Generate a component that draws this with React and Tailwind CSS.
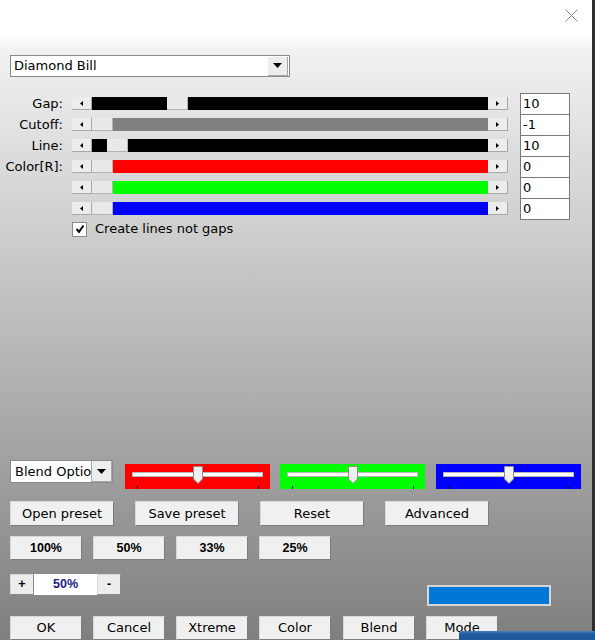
import React from "react";

function Arrow({ dir }) {
  return (
    <div className="w-[20px] h-full bg-[#ededed] border-b border-r border-[#a8a8a8] flex items-center justify-center shrink-0">
      <svg width="3" height="5" viewBox="0 0 3 5">
        <path d={dir === "l" ? "M3 0L0 2.5L3 5Z" : "M0 0L3 2.5L0 5Z"} fill="#000" />
      </svg>
    </div>
  );
}

function Slider({ offsetCls, offsetColor, trackColor }) {
  return (
    <div className="flex h-[13px] w-[436px]">
      <Arrow dir="l" />
      <div className="flex flex-1">
        {offsetCls && <div className={`${offsetCls} ${offsetColor} h-full`} />}
        <div className="w-[21px] h-full bg-[#e9e9e9] border-r border-b border-[#b4b4b4] shrink-0" />
        <div className={`flex-1 h-full ${trackColor}`} />
      </div>
      <Arrow dir="r" />
    </div>
  );
}

function Row({ label, value, slider }) {
  return (
    <div className="flex h-[21px]">
      <div className="w-[63px] text-right self-center leading-[15px]">{label}</div>
      <div className="ml-[9px] self-center">{slider}</div>
      <div className="ml-[12px] w-[50px] h-[22px] self-start border border-[#7a7a7a] bg-white pl-[2px] leading-[20px]">
        {value}
      </div>
    </div>
  );
}

function ColorPanel({ bg }) {
  return (
    <div className={`relative w-[145px] h-[25px] ${bg} shrink-0 pt-[8px] pl-[7px]`}>
      <div className="w-[131px] h-[5px] bg-white border border-[#b8b8b8]" />
      <svg className="absolute left-[68px] top-[2px]" width="10" height="18" viewBox="0 0 10 18">
        <path d="M0.5 0.5H9.5V13L5 17.5L0.5 13Z" fill="#f0f0f0" stroke="#8c8c8c" />
      </svg>
      <div className="absolute left-[12px] top-[22px] w-px h-[3px] bg-black" />
      <div className="absolute left-[133px] top-[22px] w-px h-[3px] bg-black" />
    </div>
  );
}

function Btn({ children, w = "w-[104px]", h = "h-[25px]", extra = "" }) {
  return (
    <div
      className={`${w} ${h} ${extra} shrink-0 bg-[#f0f0f0] border border-[#d8d8d8] border-b-[#7c7c7c] border-r-[#7c7c7c] flex items-center justify-center`}
    >
      {children}
    </div>
  );
}

export default function App() {
  return (
    <div
      className="relative w-[595px] h-[640px] overflow-hidden flex text-[13px] text-black"
      style={{ fontFamily: '"DejaVu Sans", Verdana, sans-serif' }}
    >
      <div className="w-[592px] h-full flex flex-col bg-[linear-gradient(to_bottom,#ffffff_0px,#ffffff_34px,#f1f1f1_50px,#7f7f7f_640px)]">
        {/* header */}
        <div className="h-[55px] flex justify-end items-start pt-[9px] pr-[14px] shrink-0">
          <svg width="13" height="13" viewBox="0 0 13 13">
            <path d="M0.5 0.5L12.5 12.5M12.5 0.5L0.5 12.5" stroke="#8a8a8a" strokeWidth="1" />
          </svg>
        </div>

        {/* preset dropdown */}
        <div className="ml-[10px] w-[280px] h-[22px] bg-white border border-[#8a8a8a] flex items-center shrink-0">
          <div className="flex-1 pl-[3px] leading-[20px]">Diamond Bill</div>
          <div className="w-[20px] h-[19px] mr-px bg-[#ededed] border-b border-r border-[#a8a8a8] flex items-center justify-center">
            <svg width="9" height="5" viewBox="0 0 9 5">
              <path d="M0 0H9L4.5 5Z" fill="#000" />
            </svg>
          </div>
        </div>

        {/* slider rows */}
        <div className="mt-[16px] flex flex-col shrink-0">
          <Row label="Gap:" value="10" slider={<Slider offsetCls="w-[75px]" offsetColor="bg-black" trackColor="bg-black" />} />
          <Row label="Cutoff:" value="-1" slider={<Slider trackColor="bg-[#808080]" />} />
          <Row label="Line:" value="10" slider={<Slider offsetCls="w-[15px]" offsetColor="bg-black" trackColor="bg-black" />} />
          <Row label="Color[R]:" value="0" slider={<Slider trackColor="bg-[#ff0000]" />} />
          <Row label="" value="0" slider={<Slider trackColor="bg-[#00ff00]" />} />
          <Row label="" value="0" slider={<Slider trackColor="bg-[#0000ff]" />} />
        </div>

        {/* checkbox */}
        <div className="mt-[2px] ml-[72px] flex items-center h-[16px] shrink-0">
          <div className="w-[15px] h-[15px] bg-white border border-[#8a8a8a] flex items-center justify-center">
            <svg width="10" height="10" viewBox="0 0 10 10">
              <path d="M1.5 5L4 7.8L8.5 1.5" stroke="#000" strokeWidth="2" fill="none" />
            </svg>
          </div>
          <div className="ml-[8px] leading-[16px]">Create lines not gaps</div>
        </div>

        {/* blend row */}
        <div className="mt-[223px] ml-[10px] flex items-start shrink-0">
          <div className="w-[103px] h-[23px] bg-white border border-[#8a8a8a] flex items-center overflow-hidden shrink-0">
            <div className="flex-1 pl-[4px] whitespace-nowrap overflow-hidden leading-[21px]">Blend Optio</div>
            <div className="w-[21px] h-[21px] bg-[#ededed] border-l border-b border-r border-[#a8a8a8] flex items-center justify-center shrink-0">
              <svg width="9" height="5" viewBox="0 0 9 5">
                <path d="M0 0H9L4.5 5Z" fill="#000" />
              </svg>
            </div>
          </div>
          <div className="ml-[12px] mt-[4px] flex">
            <ColorPanel bg="bg-[#ff0000]" />
            <div className="ml-[10px] flex">
              <ColorPanel bg="bg-[#00ff00]" />
            </div>
            <div className="ml-[11px] flex">
              <ColorPanel bg="bg-[#0000ff]" />
            </div>
          </div>
        </div>

        {/* preset buttons */}
        <div className="mt-[12px] ml-[10px] flex gap-[21px] shrink-0">
          <Btn>Open preset</Btn>
          <Btn>Save preset</Btn>
          <Btn>Reset</Btn>
          <Btn>Advanced</Btn>
        </div>

        {/* zoom buttons */}
        <div
          className="mt-[10px] ml-[10px] flex gap-[11px] shrink-0 font-bold text-[12.5px]"
          style={{ fontFamily: '"Liberation Sans", Arial, sans-serif' }}
        >
          <Btn w="w-[72px]" h="h-[24px]">100%</Btn>
          <Btn w="w-[72px]" h="h-[24px]">50%</Btn>
          <Btn w="w-[72px]" h="h-[24px]">33%</Btn>
          <Btn w="w-[72px]" h="h-[24px]">25%</Btn>
        </div>

        {/* +/- row */}
        <div className="mt-[14px] ml-[10px] flex items-start shrink-0">
          <div
            className="flex h-[21px] font-bold text-[12.5px]"
            style={{ fontFamily: '"Liberation Sans", Arial, sans-serif' }}
          >
            <div className="w-[24px] h-full bg-[#ededed] border border-[#d8d8d8] border-b-[#8a8a8a] border-r-[#8a8a8a] flex items-center justify-center">+</div>
            <div className="w-[63px] h-full bg-white flex items-center justify-center text-[#1c1c84]">50%</div>
            <div className="w-[24px] h-full bg-[#ededed] border border-[#d8d8d8] border-b-[#8a8a8a] border-r-[#8a8a8a] flex items-center justify-center">-</div>
          </div>
          <div className="ml-[306px] mt-[11px] w-[124px] h-[21px] bg-[#0078d7] border-2 border-[#d6d6d6]" />
        </div>

        {/* bottom buttons */}
        <div className="mt-[10px] ml-[10px] flex gap-[11px] shrink-0">
          <Btn w="w-[72px]" h="h-[24px]">OK</Btn>
          <Btn w="w-[72px]" h="h-[24px]">Cancel</Btn>
          <Btn w="w-[72px]" h="h-[24px]">Xtreme</Btn>
          <Btn w="w-[72px]" h="h-[24px]">Color</Btn>
          <Btn w="w-[72px]" h="h-[24px]" extra="ml-px">Blend</Btn>
          <Btn w="w-[72px]" h="h-[24px]">Mode</Btn>
        </div>
      </div>

      {/* desktop strip on the right */}
      <div className="w-[3px] h-full bg-[#2e2e2e]" />

      {/* overlapping window at bottom right */}
      <div className="absolute left-[459px] top-[631px] right-0 bottom-0 bg-[linear-gradient(to_bottom,#4a7fbd,#1f5b9d_3px,#1d5899)] rounded-tl-[2px]" />
    </div>
  );
}
